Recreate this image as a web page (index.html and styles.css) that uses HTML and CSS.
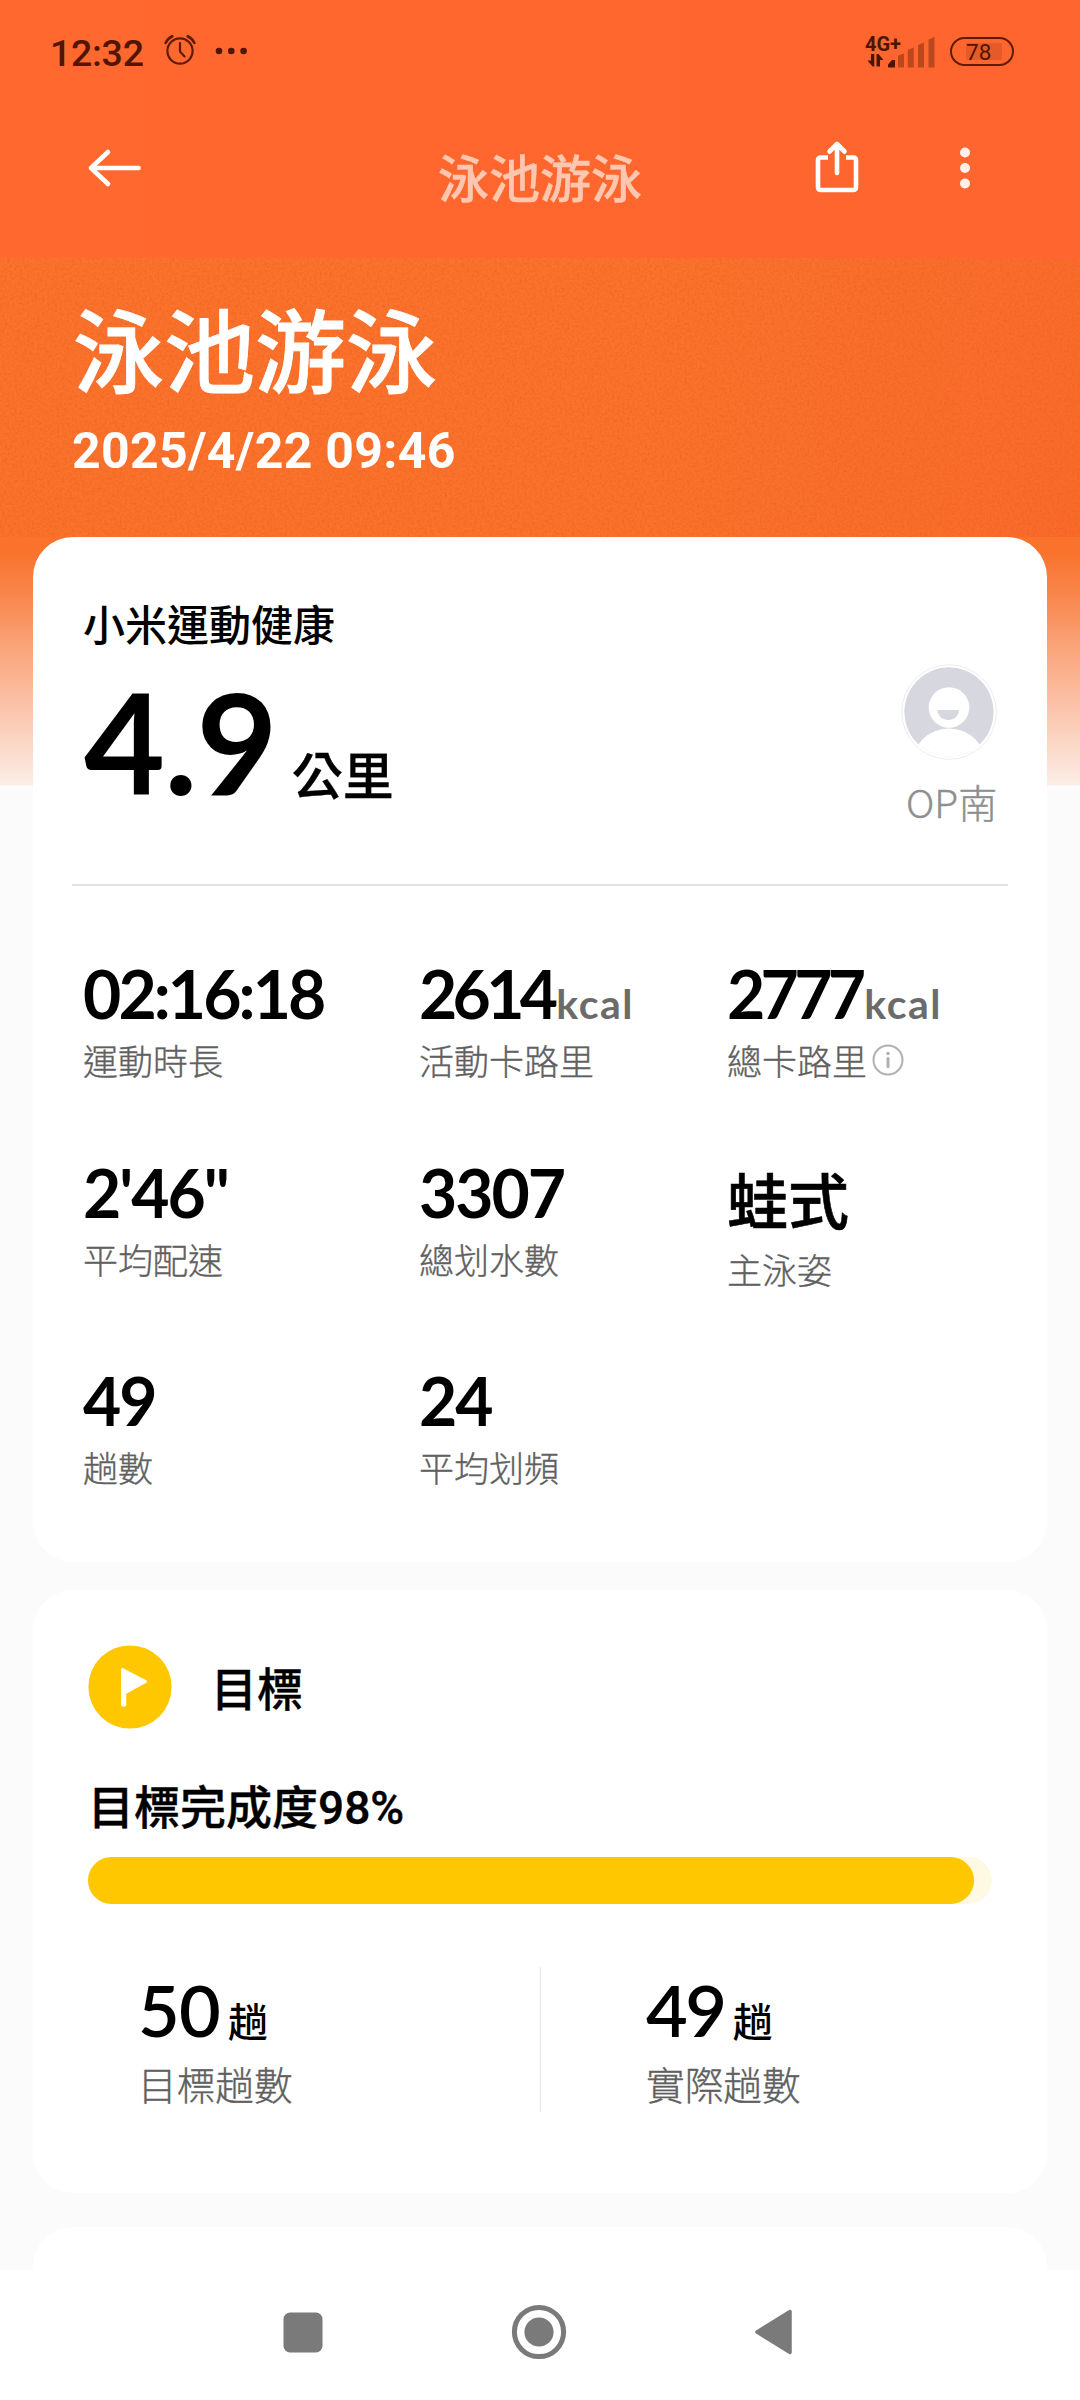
FILE: index.html
```html
<!DOCTYPE html>
<html lang="zh-Hant">
<head>
<meta charset="utf-8">
<title>泳池游泳</title>
<link rel="stylesheet" href="styles.css">
</head>
<body>
<div class="screen">
  <svg class="grain" width="1080" height="279" aria-hidden="true">
    <filter id="grain" x="0" y="0" width="100%" height="100%" color-interpolation-filters="sRGB">
      <feTurbulence type="fractalNoise" baseFrequency="0.4" numOctaves="2" seed="4"/>
      <feColorMatrix values="0 0 0 0 0.86  0 0 0 0 0.32  0 0 0 0 0.08  1.3 0 0 0 -0.5"/>
    </filter>
    <rect width="1080" height="279" filter="url(#grain)"/>
  </svg>
  <header class="top">
    <div class="status">
      <span class="clock">12:32</span>
      <svg class="alarm" width="34" height="34" viewBox="0 0 34 34" fill="none" stroke="#5e1c05" stroke-width="2.2" stroke-linecap="round" stroke-linejoin="round">
        <circle cx="17" cy="19" r="12.6"/><path d="M17 11v8.5l4.6 5"/><path d="M2.6 11C4 8 6.500 5.500 9.300 4.200M31.400 11C30 8 27.500 5.500 24.700 4.200" stroke-width="2.600"/>
      </svg>
      <svg class="more" width="32" height="8" fill="#511501"><circle cx="4" cy="4" r="3.300"/><circle cx="16.300" cy="4" r="3.300"/><circle cx="28.600" cy="4" r="3.300"/></svg>
      <div class="signal">
        <div class="net">
          <span class="net-type">4G+</span>
          <svg width="18" height="13" fill="#4a1604"><path d="M4 0h3.300v12.500H5.500L.5 6.500H4zM9.500 12.500V0h2l5 6H13v6.500z"/></svg>
        </div>
        <svg class="bars" width="48" height="31" fill="#bb471c">
          <path d="M1 30v-2.500L5 23h3v7.500H1.500z" fill="#4a1604"/>
          <path d="M11 18.500l6-2V30.500h-6zM20.800 13l6-2.500v20h-6zM31 8l6-2.500v25h-6zM41.500 2.500L47.500 0v30.500h-6z"/>
        </svg>
      </div>
      <div class="battery"><span>78</span></div>
    </div>
    <div class="appbar">
      <svg class="back" width="56" height="40" fill="none" stroke="#fff" stroke-width="4.600" stroke-linecap="round" stroke-linejoin="round"><path d="M51.500 20H4M21 4L4 20l17 16"/></svg>
      <span class="bar-title">泳池游泳</span>
      <svg class="share" width="46" height="54" fill="none" stroke="#fff" stroke-width="4.600" stroke-linecap="round" stroke-linejoin="round"><path d="M14 18.500H6.500A2.500 2.500 0 0 0 4 21v27.500A2.500 2.500 0 0 0 6.500 51h33a2.500 2.500 0 0 0 2.500-2.500V21A2.500 2.500 0 0 0 39.500 18.500H32" stroke-linecap="butt"/><path d="M23 34V6M15.500 12.500L23 5l7.500 7.500"/></svg>
      <svg class="menu" width="12" height="44" fill="#fff" fill-opacity=".9"><circle cx="6" cy="6.500" r="5"/><circle cx="6" cy="22" r="5"/><circle cx="6" cy="37.500" r="5"/></svg>
    </div>
  </header>

  <section class="hero">
    <h1>泳池游泳</h1>
    <p>2025/4/22 09:46</p>
  </section>

  <main class="cards">
    <section class="card overview">
      <div class="summary">
        <div>
          <div class="source">小米運動健康</div>
          <div class="distance">4.9<span>公里</span></div>
        </div>
        <div class="user">
          <svg width="96" height="96">
            <clipPath id="disc"><circle cx="48" cy="48" r="44.700"/></clipPath>
            <circle cx="48" cy="48" r="47.300" fill="#fff" stroke="#ededf1"/>
            <g clip-path="url(#disc)"><circle cx="48" cy="48" r="45" fill="#d7d7e0"/><circle cx="48" cy="102" r="37.500" fill="#fff"/></g>
            <circle cx="48" cy="43.500" r="20.300" fill="#fff"/>
            <path d="M36.500 46h21.500c0 6-5 10-10.700 10s-10.800-4-10.800-10z" fill="#d7d7e0"/>
          </svg>
          <span>OP南</span>
        </div>
      </div>
      <div class="stats">
        <div class="stat"><b class="time">02:16:18</b><span>運動時長</span></div>
        <div class="stat"><b class="energy">2614<i>kcal</i></b><span>活動卡路里</span></div>
        <div class="stat"><b class="energy">2777<i>kcal</i></b><span>總卡路里<svg class="info" width="32" height="32" fill="none" stroke="#b0b0b0" stroke-width="2"><circle cx="16" cy="16" r="14.500"/><path d="M16 14.500v8" stroke-width="3" stroke-linecap="round"/><circle cx="16" cy="9.500" r="1" stroke-width="1.600"/></svg></span></div>
        <div class="stat"><b>2'46"</b><span>平均配速</span></div>
        <div class="stat"><b>3307</b><span>總划水數</span></div>
        <div class="stat stat-text"><b>蛙式</b><span>主泳姿</span></div>
        <div class="stat"><b>49</b><span>趟數</span></div>
        <div class="stat"><b>24</b><span>平均划頻</span></div>
      </div>
    </section>

    <section class="card goal">
      <div class="goal-head">
        <svg width="84" height="84"><circle cx="42" cy="42" r="41.600" fill="#fec700"/><path d="M34.500 24.500L57.500 36.500 36.800 48V60h-2.300z" fill="#fff" stroke="#fff" stroke-width="2.800" stroke-linejoin="round"/></svg>
        <h2>目標</h2>
      </div>
      <div class="goal-rate">目標完成度98%</div>
      <div class="track"><div class="fill" style="width:98%"></div></div>
      <div class="laps">
        <div class="lap"><b>50<i>趟</i></b><span>目標趟數</span></div>
        <div class="lap"><b>49<i>趟</i></b><span>實際趟數</span></div>
      </div>
    </section>

    <section class="card next"></section>
  </main>

  <nav class="nav">
    <svg width="40" height="41"><rect x=".5" y=".5" width="39" height="40" rx="6.500" fill="#7a7a7a"/></svg>
    <svg width="56" height="56"><circle cx="28" cy="28" r="24.600" fill="none" stroke="#7a7a7a" stroke-width="5"/><circle cx="28" cy="28" r="14.600" fill="#7a7a7a"/></svg>
    <svg width="40" height="48"><path d="M36 3.500v41L3 24z" fill="#7a7a7a" stroke="#7a7a7a" stroke-width="3.500" stroke-linejoin="round"/></svg>
  </nav>
</div>
</body>
</html>
```
FILE: styles.css
```css
* { box-sizing: border-box; margin: 0; padding: 0; }
body { background: #fbfbfb; }
svg { display: block; flex: none; }
i { font-style: normal; }

.screen {
  position: relative;
  width: 1080px;
  height: 2400px;
  overflow: hidden;
  display: flex;
  flex-direction: column;
  color: #000;
  font-family: "Noto Sans CJK TC", sans-serif;
  background: linear-gradient(#fb742e 0, #fa722c 550px, #f98347 590px, #faa57c 650px, #fbcab3 720px, #fceee7 785px, #fbfbfb 786px);
}
.grain { position: absolute; left: 0; top: 258px; opacity: .5; }

.top {
  height: 258px;
  background: linear-gradient(90deg, #ff682f, #ff652e);
  position: relative;
}
.status {
  height: 102px;
  padding: 0 66px 0 50px;
  display: flex;
  align-items: center;
  color: #511501;
  font-family: Roboto, sans-serif;
}
.clock { font-size: 37.5px; font-weight: 500; line-height: 44px; margin-top: 3px; width: 113px; letter-spacing: -.3px; }
.alarm { margin-top: -4px; }
.more { margin-left: 18px; }
.signal { display: flex; margin-left: auto; align-items: flex-end; height: 33px; width: 70px; }
.net { width: 20px; height: 33px; }
.net svg { margin-left: 1px; }
.net-type { display: block; font-size: 20px; font-weight: 700; line-height: 18px; height: 19px; margin-left: -1px; white-space: nowrap; color: #4a1604; }
.bars { margin: 0 -1px 0 1px; }
.battery {
  width: 64px;
  height: 29px;
  margin-left: 14px;
  border: 2.5px solid #5e1c05;
  border-radius: 15px;
  display: flex;
  align-items: center;
  padding-left: 14px;
  font-size: 22.5px;
  font-weight: 400;
  line-height: 22px;
  background: linear-gradient(#e65a28, #e65a28) 14px center / 36px 17px no-repeat;
}
.battery span { margin-top: 2px; }
.appbar { height: 156px; display: flex; align-items: flex-start; padding: 0 109px 0 87px; }
.back { margin-top: 46px; }
.bar-title { font-size: 51px; font-weight: 500; line-height: 60px; margin: 44px 0 0 295px; width: 206px; color: #ffc7af; -webkit-text-stroke: .4px; }
.share { margin: 37px 0 0 170px; }
.menu { margin: 44px 0 0 auto; }

.hero {
  height: 279px;
  padding: 38px 0 0 73px;
  color: #fff;
  position: relative;
  background: linear-gradient(90deg, rgba(247, 95, 38, 0) 60%, rgba(247, 85, 38, .25));
}
.hero h1 { font-size: 91px; line-height: 100px; font-weight: 500; -webkit-text-stroke: .8px; }
.hero p { font: 700 50px/60px Roboto, sans-serif; margin: 25px 0 0 -1px; letter-spacing: .3px; white-space: nowrap; }

.cards { padding: 0 33px; position: relative; }
.card { background: #fff; border-radius: 40px; }
.overview { height: 1025px; padding: 55px 39px 0; margin-bottom: 28px; }
.summary {
  height: 294px;
  border-bottom: 2px solid #e2e2e2;
  padding: 0 11px 0 12px;
  display: flex;
  justify-content: space-between;
}
.source { font-size: 42px; font-weight: 500; line-height: 60px; margin-left: -1px; padding-top: 1px; }
.distance { font: 700 140px/141px Lato, sans-serif; margin-top: 18px; letter-spacing: -1px; white-space: nowrap; }
.distance span { font: 500 51px/51px "Noto Sans CJK TC", sans-serif; letter-spacing: 0; margin-left: 15px; -webkit-text-stroke: .3px; }
.user { width: 96px; margin-top: 72px; }
.user span { display: block; margin: 16px 0 0 5px; font-size: 39px; line-height: 50px; font-weight: 300; color: #8f8f8f; -webkit-text-stroke: .4px; white-space: nowrap; }

.stats {
  padding: 75px 0 0 11px;
  display: grid;
  grid-template-columns: 336px 308px 1fr;
  grid-template-rows: 199px 208px auto;
}
.stat b { display: block; font: 700 66px/66px Lato, sans-serif; letter-spacing: -2px; white-space: nowrap; }
.stat b.time { letter-spacing: -2.9px; }
.stat b.energy { letter-spacing: -4.7px; }
.stat b i { font-size: 41px; line-height: 40px; letter-spacing: 1.5px; margin-left: 3px; color: #6b6b6b; }
.stat > span { display: flex; align-items: center; font-size: 35px; line-height: 44px; font-weight: 300; margin-top: 11px; color: #606060; -webkit-text-stroke: .35px; }
.stat-text b { font: 500 61px/77px "Noto Sans CJK TC", sans-serif; letter-spacing: 0; -webkit-text-stroke: .6px; }
.stat-text > span { margin-top: 10px; }
.info { margin: -1px 0 0 5px; }

.goal { height: 603px; padding: 55px 55px 0; margin-bottom: 34px; }
.goal-head { display: flex; align-items: center; height: 84px; }
.goal-head h2 { font-size: 46px; line-height: 60px; font-weight: 500; margin: -2px 0 0 39px; -webkit-text-stroke: .3px; }
.goal-rate { font-family: Roboto, "Noto Sans CJK TC", sans-serif; font-weight: 500; font-size: 46px; line-height: 60px; margin: 49px 0 0; white-space: nowrap; -webkit-text-stroke: .4px; }
.track { height: 47px; margin-top: 19px; border-radius: 24px; background: #fff9e3; }
.fill { height: 47px; border-radius: 24px; background: #fec700; }
.laps { display: grid; grid-template-columns: 452px 1fr; height: 145px; margin-top: 63px; }
.lap { padding: 6px 0 0 50px; }
.lap + .lap { border-left: 1.5px solid #e6e6e6; padding-left: 105px; }
.lap b { display: block; font: 600 72px/72px Lato, sans-serif; letter-spacing: -.8px; white-space: nowrap; }
.lap + .lap b { letter-spacing: -2.4px; }
.lap b i { font: 500 40px/40px "Noto Sans CJK TC", sans-serif; margin-left: 8px; letter-spacing: 0; }
.lap > span { display: block; font-size: 38.7px; line-height: 50px; margin-top: 13px; font-weight: 300; color: #606060; -webkit-text-stroke: .35px; }
.next { height: 43px; border-radius: 40px 40px 0 0; }

.nav { flex: 1; background: #fff; position: relative; display: flex; align-items: center; padding: 0 0 6px 283px; }
.nav svg:nth-child(2) { margin-left: 188px; }
.nav svg:nth-child(3) { margin-left: 187px; }
```
